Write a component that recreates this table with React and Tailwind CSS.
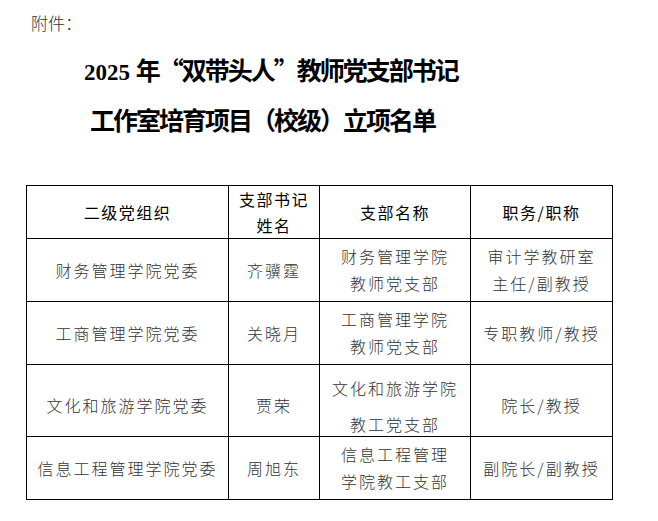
const rows = [
  { h: "h-[63px]", org: "财务管理学院党委", name: "齐骥霆", branch: ["财务管理学院", "教师党支部"], title: ["审计学教研室", "主任/副教授"] },
  { h: "h-[63px]", org: "工商管理学院党委", name: "关晓月", branch: ["工商管理学院", "教师党支部"], title: ["专职教师/教授"] },
  { h: "h-[72px]", org: "文化和旅游学院党委", name: "贾荣", branch: ["文化和旅游学院", "教工党支部"], title: ["院长/教授"], wide: true },
  { h: "h-[63px]", org: "信息工程管理学院党委", name: "周旭东", branch: ["信息工程管理", "学院教工支部"], title: ["副院长/副教授"] },
]

const cell = "border border-black text-center align-middle p-0"

export default function App() {
  return (
    <div className="w-[658px] h-[521px] bg-white overflow-hidden font-['Noto_Sans_CJK_SC',sans-serif]">
      <div className="pt-[13px] pl-[31px] text-[17px] leading-[20px] font-light text-[#333]">附件：</div>

      <div className="mt-[13px] font-bold text-black text-[25px] tracking-[-2px] leading-[47px] font-['Liberation_Serif','Noto_Sans_CJK_SC',serif]">
        <div className="pl-[84px] whitespace-nowrap">
          <span className="text-[23px] tracking-normal">2025 </span>年<span className="inline-block w-[23px] text-right font-['Noto_Sans_CJK_SC',sans-serif]">“</span>双带头人<span className="inline-block w-[23px] text-left font-['Noto_Sans_CJK_SC',sans-serif]">”</span>教师党支部书记
        </div>
        <div className="pl-[90px] whitespace-nowrap font-['Noto_Sans_CJK_SC',sans-serif]">工作室培育项目（校级）立项名单</div>
      </div>

      <table className="mt-[42px] ml-[26px] w-[587px] table-fixed border-collapse">
        <colgroup>
          <col className="w-[202px]" />
          <col className="w-[91px]" />
          <col className="w-[151px]" />
          <col className="w-[142px]" />
        </colgroup>
        <thead>
          <tr className="h-[52px] text-[16px] text-black tracking-[1.5px]">
            <th className={`${cell} font-normal leading-[26px]`}>二级党组织</th>
            <th className={`${cell} font-normal leading-[26px]`}>支部书记<br />姓名</th>
            <th className={`${cell} font-normal leading-[26px]`}>支部名称</th>
            <th className={`${cell} font-normal leading-[26px]`}>职务/职称</th>
          </tr>
        </thead>
        <tbody className="text-[16px] font-light text-[#333] tracking-[2px]">
          {rows.map((r) => (
            <tr key={r.name} className={r.h}>
              <td className={`${cell} leading-[27px] ${r.wide ? "pt-[10px]" : ""}`}>{r.org}</td>
              <td className={`${cell} leading-[27px] ${r.wide ? "pt-[10px]" : ""}`}>{r.name}</td>
              <td className={`${cell} ${r.wide ? "leading-[36px] align-top" : "leading-[27px]"}`}>
                {r.wide ? (
                  <div className="h-[60px] pt-[5px]">
                    {r.branch.map((t) => <div key={t}>{t}</div>)}
                  </div>
                ) : (
                  r.branch.map((t) => <div key={t}>{t}</div>)
                )}
              </td>
              <td className={`${cell} leading-[27px] ${r.wide ? "pt-[10px]" : ""}`}>
                {r.title.map((t) => <div key={t}>{t}</div>)}
              </td>
            </tr>
          ))}
        </tbody>
      </table>
    </div>
  )
}
